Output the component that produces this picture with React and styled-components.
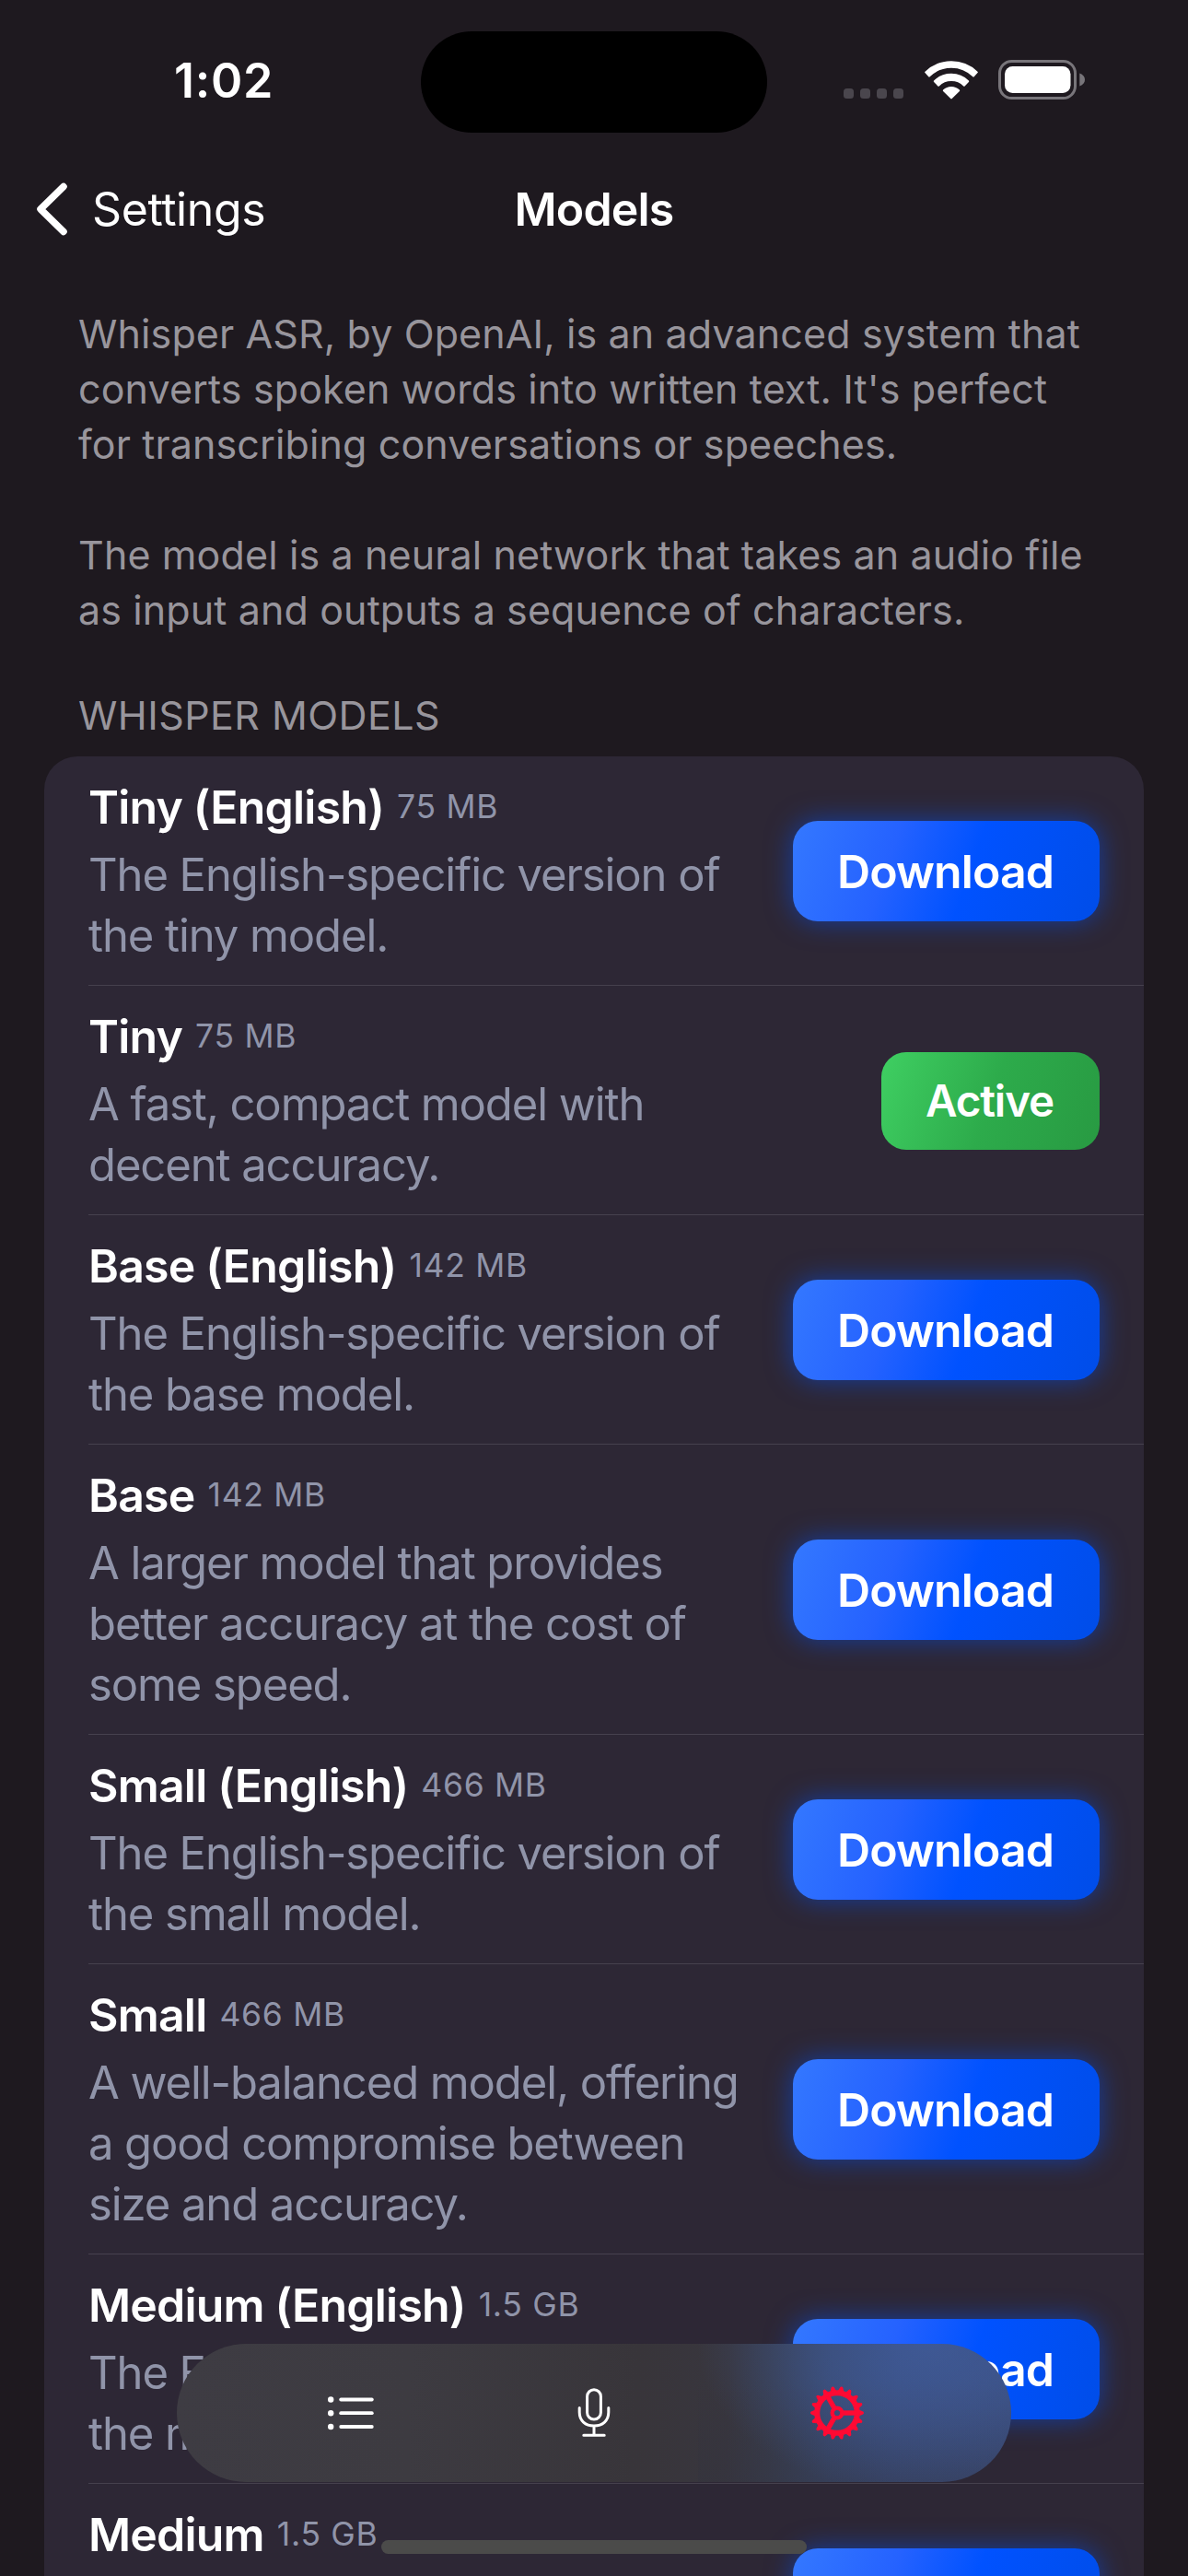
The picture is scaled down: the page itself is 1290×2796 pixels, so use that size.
import React from "react";
import styled, { createGlobalStyle, css } from "styled-components";

const GlobalStyle = createGlobalStyle`
  *, *::before, *::after { box-sizing: border-box; }
  html, body { margin: 0; background: #1e191f; }
  body { font-family: Inter, "Liberation Sans", sans-serif; -webkit-font-smoothing: antialiased; }
  p, h1, h2, h3, ul { margin: 0; padding: 0; font-weight: inherit; font-size: inherit; }
`;

const Screen = styled.div`
  position: relative;
  width: 1290px;
  height: 2796px;
  overflow: hidden;
  background: #1e191f;
  color: #fff;
`;

const StatusBar = styled.header`
  display: grid;
  grid-template-columns: 457px 376px 457px;
  align-items: center;
  padding-top: 34px;
`;

const Clock = styled.span`
  margin-top: -2px;
  padding-left: 189px;
  font-size: 52px;
  font-weight: 600;
  line-height: 60px;
  letter-spacing: 0.7px;
`;

const Island = styled.div`
  height: 110px;
  border-radius: 55px;
  background: #000;
`;

const StatusIcons = styled.div`
  display: flex;
  align-items: center;
  gap: 22.7px;
  margin-top: -5px;
  padding-left: 83px;
  svg { display: block; }
`;

const NavBar = styled.nav`
  display: grid;
  grid-template-columns: 1fr auto 1fr;
  align-items: center;
  height: 166px;
  padding: 0 38px 0 38px;
  font-size: 50px;
  line-height: 60px;
`;

const BackButton = styled.button`
  display: flex;
  align-items: center;
  gap: 24px;
  padding: 0;
  border: 0;
  background: none;
  color: inherit;
  font: inherit;
  letter-spacing: -0.4px;
`;

const NavTitle = styled.h1`
  font-weight: 600;
  letter-spacing: -0.8px;
`;

const Intro = styled.section`
  display: flex;
  flex-direction: column;
  gap: 60px;
  padding: 22px 86px 0 85px;
  color: #98959c;
  font-size: 43px;
  line-height: 60px;
  letter-spacing: 0.12px;
`;

const SectionTitle = styled.h2`
  margin: 59px 0 20px 85px;
  color: #98959c;
  font-size: 43px;
  line-height: 50px;
  letter-spacing: 0.43px;
  text-transform: uppercase;
`;

const Card = styled.ul`
  margin: 0 48px;
  padding-left: 48px;
  border-radius: 36px 36px 0 0;
  background: #2d2735;
  list-style: none;
`;

const Row = styled.li`
  display: flex;
  align-items: center;
  justify-content: space-between;
  min-height: 249px;
  padding-right: 48px;
  border-bottom: 1px solid #46414e;
`;

const RowText = styled.div`
  display: flex;
  flex-direction: column;
  align-self: flex-start;
  gap: 11px;
  width: 720px;
  margin-right: -20px;
  padding: 25px 0 20px;
`;

const RowHeading = styled.div`
  display: flex;
  align-items: center;
  gap: 14px;
  height: 60px;
`;

const ModelName = styled.h3`
  font-size: 50px;
  font-weight: 600;
  letter-spacing: -0.8px;
`;

const ModelSize = styled.span`
  margin-bottom: 2px;
  color: #9094a9;
  font-size: 35.5px;
  letter-spacing: 0.7px;
`;

const Description = styled.p`
  color: #9094a9;
  font-size: 49px;
  line-height: 66px;
  letter-spacing: -1.1px;
`;

const ActionButton = styled.button`
  flex: none;
  display: flex;
  align-items: center;
  justify-content: center;
  margin-top: 1px;
  padding: 0 2px 0 0;
  border: 0;
  border-radius: 27px;
  color: #fff;
  font-family: inherit;
  font-weight: 600;
  ${({ $active }) =>
    $active
      ? css`
          width: 237px;
          height: 106px;
          font-size: 47.5px;
          letter-spacing: -1.1px;
          background: linear-gradient(109deg, #3fcf62 0%, #2dab4b 50%, #289a42 100%);
        `
      : css`
          width: 333px;
          height: 109px;
          font-size: 50px;
          letter-spacing: -0.9px;
          background: linear-gradient(109deg, #3478ff 0%, #2562ff 32%, #0052ff 57%, #004de8 100%);
          box-shadow: 0 0 29px rgba(0, 82, 255, 0.54);
        `}
`;

const TabBar = styled.nav`
  position: absolute;
  left: 192px;
  top: 2544px;
  display: grid;
  grid-template-columns: repeat(3, 264px);
  justify-content: center;
  width: 906px;
  height: 150px;
  border-radius: 75px;
  background:
    radial-gradient(ellipse 250px 165px at 90% 0%, rgba(66, 98, 168, 0.6) 0%, rgba(66, 98, 168, 0.35) 50%, rgba(66, 98, 168, 0) 100%),
    linear-gradient(180deg, rgba(52, 51, 60, 0) 25%, rgba(50, 50, 62, 0.4) 100%) right / 340px 100% no-repeat,
    linear-gradient(92deg, #3e3c43 0%, #3d3b41 28%, #38353a 55%, #38363e 66%, #383c4c 71%, #384668 78%, #394a76 86%, #3a4b78 100%);
`;

const Tab = styled.button`
  display: flex;
  align-items: center;
  justify-content: center;
  padding: 0;
  border: 0;
  background: none;
  color: ${({ $selected }) => ($selected ? "#ff0a33" : "#fff")};
`;

const HomeIndicator = styled.div`
  position: absolute;
  left: 414px;
  top: 2757px;
  width: 462px;
  height: 15px;
  border-radius: 8px;
  background: #4b4b4a;
`;

const SignalDots = () => (
  <svg width="65" height="43" fill="#4a464d">
    {[0, 18, 36, 54].map((x) => (
      <rect key={x} x={x} y="31" width="11" height="11" rx="3.5" />
    ))}
  </svg>
);

const WifiIcon = () => (
  <svg width="58" height="43" viewBox="0 0 58 43" fill="#fff" stroke="#fff" strokeWidth="2" strokeLinejoin="round">
    <path d="M1.2 13.4A40.5 40.5 0 0 1 56.8 13.4L53 17.6A34 34 0 0 0 5 17.6Z" />
    <path d="M10.8 23.2A26.2 26.2 0 0 1 47.2 23.2L42.9 27.7A19.7 19.7 0 0 0 15.1 27.7Z" />
    <path d="M20.8 33.2A12 12 0 0 1 37.2 33.2L29 41.4Z" />
  </svg>
);

const BatteryIcon = () => (
  <svg width="95" height="43" viewBox="0 0 95 43">
    <rect x="1.5" y="1.5" width="82" height="40" rx="13" fill="none" stroke="#78757a" strokeWidth="3" />
    <rect x="7" y="7" width="71.5" height="29" rx="8.5" fill="#fff" />
    <path d="M88.3 14.5C92.2 16 94 18.5 94 21.5S92.2 27 88.3 28.5Z" fill="#78757a" />
  </svg>
);

const ChevronIcon = () => (
  <svg width="38" height="60" viewBox="0 0 38 60" fill="none" stroke="#fff" strokeWidth="7.5" strokeLinecap="round" strokeLinejoin="round">
    <path d="M31 5.5L6 30L31 54.5" />
  </svg>
);

const ListIcon = () => (
  <svg width="50" height="38" viewBox="0 0 50 38" fill="currentColor">
    {[4.5, 19.2, 34].map((y) => (
      <React.Fragment key={y}>
        <circle cx="3.2" cy={y} r="3.2" />
        <rect x="12.3" y={y - 1.9} width="37.4" height="3.8" rx="1.9" />
      </React.Fragment>
    ))}
  </svg>
);

const MicIcon = () => (
  <svg width="36" height="54" viewBox="0 0 36 54" fill="none" stroke="currentColor" strokeWidth="3" strokeLinecap="round">
    <rect x="10.6" y="1.7" width="14.8" height="32.4" rx="7.4" />
    <path d="M2.2 21.5V26.3C2.2 35.4 8.6 41 18 41S33.8 35.4 33.8 26.3V21.5M18 41V51.3M6.8 51.3H29.2" />
  </svg>
);

const TEETH = Array.from({ length: 18 }, (_, i) => i * 20);

const GearIcon = () => (
  <svg width="60" height="60" viewBox="-30 -30 60 60" fill="none" stroke="currentColor">
    {TEETH.map((angle) => (
      <path key={angle} d="M23.5 -3.4L27.6 -1.7Q29 -1.4 29 0T27.6 1.7L23.5 3.4Z" fill="currentColor" stroke="none" transform={`rotate(${angle})`} />
    ))}
    <circle r="21.8" strokeWidth="6" />
    <circle r="5.3" strokeWidth="4.4" />
    {[0, 120, 240].map((angle) => (
      <path key={angle} d="M6.5 0H20.5" strokeWidth="5.4" transform={`rotate(${angle})`} />
    ))}
  </svg>
);

const MODELS = [
  { name: "Tiny (English)", size: "75 MB", text: "The English-specific version of the tiny model." },
  { name: "Tiny", size: "75 MB", text: "A fast, compact model with decent accuracy.", action: "Active" },
  { name: "Base (English)", size: "142 MB", text: "The English-specific version of the base model." },
  { name: "Base", size: "142 MB", text: "A larger model that provides better accuracy at the cost of some speed." },
  { name: "Small (English)", size: "466 MB", text: "The English-specific version of the small model." },
  { name: "Small", size: "466 MB", text: "A well-balanced model, offering a good compromise between size and accuracy." },
  { name: "Medium (English)", size: "1.5 GB", text: "The English-specific version of the medium model." },
  { name: "Medium", size: "1.5 GB", action: "" },
];

const ModelRow = ({ name, size, text, action = "Download" }) => (
  <Row>
    <RowText>
      <RowHeading>
        <ModelName>{name}</ModelName>
        <ModelSize>{size}</ModelSize>
      </RowHeading>
      {text && <Description>{text}</Description>}
    </RowText>
    <ActionButton $active={action === "Active"}>{action}</ActionButton>
  </Row>
);

export default function App() {
  return (
    <Screen>
      <GlobalStyle />
      <StatusBar>
        <Clock>1:02</Clock>
        <Island />
        <StatusIcons>
          <SignalDots />
          <WifiIcon />
          <BatteryIcon />
        </StatusIcons>
      </StatusBar>
      <NavBar>
        <BackButton>
          <ChevronIcon />
          Settings
        </BackButton>
        <NavTitle>Models</NavTitle>
      </NavBar>
      <Intro>
        <p>
          Whisper ASR, by OpenAI, is an advanced system that converts spoken words into written text. It's perfect for
          transcribing conversations or speeches.
        </p>
        <p>The model is a neural network that takes an audio file as input and outputs a sequence of characters.</p>
      </Intro>
      <SectionTitle>Whisper Models</SectionTitle>
      <Card>
        {MODELS.map((model) => (
          <ModelRow key={model.name} {...model} />
        ))}
      </Card>
      <TabBar>
        <Tab aria-label="Recordings">
          <ListIcon />
        </Tab>
        <Tab aria-label="Record">
          <MicIcon />
        </Tab>
        <Tab aria-label="Settings" $selected>
          <GearIcon />
        </Tab>
      </TabBar>
      <HomeIndicator />
    </Screen>
  );
}
